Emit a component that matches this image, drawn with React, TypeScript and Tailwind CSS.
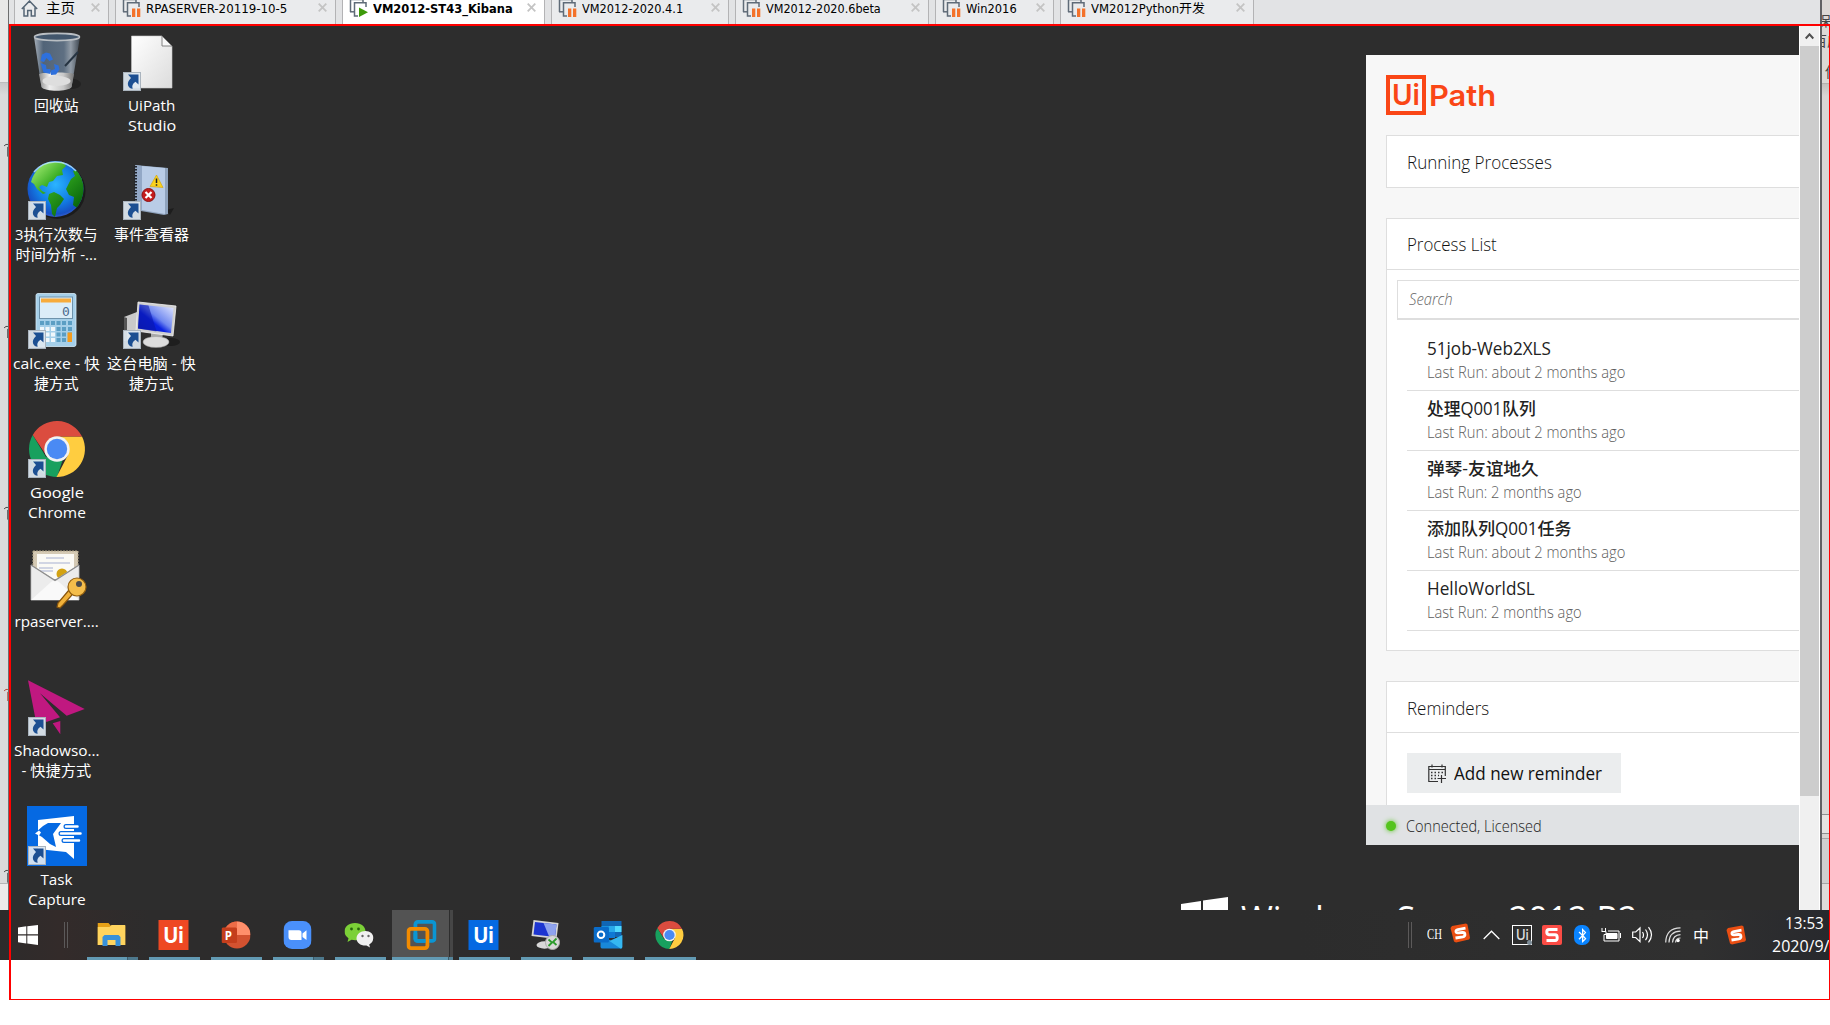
import { useLayoutEffect, useRef, useState } from "react";
import type { ReactNode } from "react";
import { FaBluetoothB } from "react-icons/fa";

/** Single line of text condensed or widened to an exact measure. */
function Fit({ w, className = "", children }: { w: number; className?: string; children: ReactNode }) {
  const ref = useRef<HTMLSpanElement>(null);
  const [scale, setScale] = useState(1);
  useLayoutEffect(() => {
    if (ref.current) setScale(w / ref.current.offsetWidth);
  }, [w]);
  return (
    <span className={`block shrink-0 whitespace-nowrap ${className}`} style={{ width: w }}>
      <span ref={ref} className="inline-block origin-left" style={{ transform: `scaleX(${scale})` }}>
        {children}
      </span>
    </span>
  );
}

const UI = "font-['Open_Sans','Noto_Sans_CJK_SC',sans-serif]";

/* ---------- tab strip ---------- */

function VmIcon({ running }: { running?: boolean }) {
  return (
    <svg width="19" height="20" viewBox="0 0 19 20" className="shrink-0" fill="none">
      <path d="M1.5 14V1.5H14V4" stroke="#5f6b78" strokeWidth="1.5" />
      <path d="M1 13.8h4" stroke="#5f6b78" strokeWidth="1.5" />
      <path d="M17 9V4.700H5.500V18H9" stroke="#5f6b78" strokeWidth="1.5" />
      {running ? (
        <path d="M10 9.500v9.500l9-4.700z" fill="#3d9a0a" />
      ) : (
        <path d="M10 10.500h3.300V19H10zM15 10.500h3.300V19H15z" fill="#f4722b" />
      )}
    </svg>
  );
}

function CloseX() {
  return (
    <svg width="9" height="9" viewBox="0 0 9 9" className="mt-[3px] shrink-0">
      <path d="M.7.700l7.600 7.600M8.300.700L.7 8.300" stroke="#c4c4c4" strokeWidth="1.800" />
    </svg>
  );
}

function Tab({ label, tw, width, active }: { label: string; tw: number; width: number; active?: boolean }) {
  return (
    <div
      className={`mr-[6px] flex h-full shrink-0 justify-between border-x border-[#b3b3b5] pl-[6px] pr-[8px] ${active ? "bg-white" : "bg-[#eaebed]"}`}
      style={{ width }}
    >
      <div className="flex gap-[5px]">
        <div className="-mt-[2px]">
          <VmIcon running={active} />
        </div>
        <Fit
          w={tw}
          className={`font-['DejaVu_Sans_Condensed','DejaVu_Sans','Noto_Sans_CJK_SC',sans-serif] text-[12.500px] leading-[17px] text-black ${active ? "font-bold" : ""}`}
        >
          {label}
        </Fit>
      </div>
      <CloseX />
    </div>
  );
}

function TabStrip() {
  return (
    <div className="flex h-[26px] w-full bg-[#e2e3e5] pl-[5px]">
      <div className="mr-[6px] flex h-full w-[95px] shrink-0 justify-between border-x border-[#b3b3b5] bg-[#eaebed] pl-[6px] pr-[8px]">
        <div className="flex gap-[8px]">
          <svg width="17" height="17" viewBox="0 0 17 17" className="shrink-0" fill="none">
            <path d="M.8 9L8.500 1l7.700 8M3 7.500V16h3.700v-5.500h3.600V16H14V7.500" stroke="#556575" strokeWidth="1.500" />
          </svg>
          <Fit w={29} className="font-['Noto_Sans_CJK_SC',sans-serif] text-[14px] leading-[15px] text-black">
            主页
          </Fit>
        </div>
        <CloseX />
      </div>
      <Tab label="RPASERVER-20119-10-5" tw={141} width={221} />
      <Tab label="VM2012-ST43_Kibana" tw={140} width={203} active />
      <Tab label="VM2012-2020.4.1" tw={101} width={178} />
      <Tab label="VM2012-2020.6beta" tw={115} width={194} />
      <Tab label="Win2016" tw={51} width={119} />
      <Tab label="VM2012Python开发" tw={114} width={194} />
    </div>
  );
}

/* ---------- desktop icons ---------- */

function ShortcutArrow() {
  return (
    <svg width="18" height="19" viewBox="0 0 18 19" className="absolute left-px top-[40px]">
      <rect x=".5" y=".5" width="17" height="18" fill="#dfe8f1" fillOpacity=".93" stroke="#aab4be" />
      <path d="M5 2.500h10.500v10l-3-2.700c-3 2-3.800 4-2.800 7C5 16.500 2.500 11 8 6z" fill="#1c4f92" />
    </svg>
  );
}

const ICON = "block h-[60px] w-[60px] overflow-visible";

function BinIcon() {
  return (
    <svg viewBox="0 0 60 60" className={ICON}>
      <defs>
        <linearGradient id="bin" x1="0" x2="1">
          <stop offset="0" stopColor="#a7b0ba" />
          <stop offset=".2" stopColor="#526478" />
          <stop offset=".65" stopColor="#5e6f82" />
          <stop offset=".8" stopColor="#929ca7" />
          <stop offset="1" stopColor="#3d4650" />
        </linearGradient>
        <linearGradient id="binBase" x1="0" x2="1">
          <stop offset="0" stopColor="#8f8f8f" />
          <stop offset=".3" stopColor="#eee" />
          <stop offset=".7" stopColor="#c8c8c8" />
          <stop offset="1" stopColor="#777" />
        </linearGradient>
      </defs>
      <ellipse cx="45" cy="52" rx="9" ry="5" fill="#222" />
      <path d="M7 5l7.500 50c3 4 27 4 30 0L53 5z" fill="url(#bin)" />
      <path d="M12 42l2.500 13c3 5 27 5 30 0L47 42c-5-2-30-2-35 0z" fill="url(#binBase)" />
      <ellipse cx="29.500" cy="49" rx="14" ry="5" fill="#dedede" />
      <ellipse cx="30" cy="5" rx="22.500" ry="3.600" fill="#42566c" stroke="#b9bec3" strokeWidth="1.600" />
      <path d="M15 22.500l4-2 4 1 3 6-3.500 1.500-3-3-2.500 4-3.500-1zM13.500 31l5.500 2 .5 4 4 0v5l-7-1.500zM27 32l4.500 1.500 1 4-3.500 5-5 .5v-4.500l4-1.500z" fill="#2e70dc" />
      <path d="M51 20L38 34" stroke="#263442" strokeWidth="2" />
    </svg>
  );
}

function DocIcon() {
  return (
    <svg viewBox="0 0 60 60" className={ICON}>
      <defs>
        <linearGradient id="doc" x1="0" y1="0" x2="1" y2="1">
          <stop offset="0" stopColor="#fff" />
          <stop offset="1" stopColor="#dcdcdc" />
        </linearGradient>
      </defs>
      <path d="M9.500 4h30.500L50 14v42H9.500z" fill="url(#doc)" stroke="#c6c6c6" strokeWidth=".6" />
      <path d="M40 4v10h10z" fill="#f8f8f8" stroke="#777" strokeWidth=".9" />
    </svg>
  );
}

function GlobeIcon() {
  return (
    <svg viewBox="0 1 60 60" className={ICON}>
      <defs>
        <radialGradient id="sea" cx=".5" cy=".42" r=".62">
          <stop offset="0" stopColor="#2bb4ff" />
          <stop offset=".55" stopColor="#127de4" />
          <stop offset=".85" stopColor="#1650c4" />
          <stop offset="1" stopColor="#4d6ad6" />
        </radialGradient>
        <linearGradient id="land" gradientUnits="userSpaceOnUse" x1="8" y1="6" x2="50" y2="50">
          <stop offset="0" stopColor="#9be86c" />
          <stop offset=".4" stopColor="#33a91f" />
          <stop offset="1" stopColor="#07630c" />
        </linearGradient>
        <clipPath id="globeClip">
          <circle cx="28.500" cy="29" r="28" />
        </clipPath>
      </defs>
      <circle cx="30.500" cy="31" r="28" fill="#1b1b1b" />
      <circle cx="28.500" cy="29" r="28" fill="url(#sea)" />
      <g clipPath="url(#globeClip)" fill="url(#land)">
        <path d="M4 22C7 11 15 4 22 2l14 0 3 4-4 4 1 5-6 1-4 5-4 1-2 5-5-2-3 2 3 4 4 2-3 1-6-5-3-5z" />
        <path d="M22 34l5-2 6 3 4 4-4 6-3 3-2 9-3-3-1-9-3-6z" />
        <path d="M44 19l4-3-2-5 4-1 8 12v16l-8 10-4-3 1-8-5-2-3-6z" />
      </g>
      <path d="M7 12A28 28 0 0 1 49 11" stroke="#bfeaff" strokeOpacity=".8" strokeWidth="1.500" fill="none" />
    </svg>
  );
}

function EventIcon() {
  return (
    <svg viewBox="0 1 60 60" className={ICON}>
      <path d="M44 50l8-2-4 7z" fill="#1d1d1d" />
      <path d="M13 5l33 3v46l-4 1-29-5z" fill="#8fa3bd" />
      <path d="M14 5.500l29 2.500v46L14 49z" fill="#b9cce6" />
      <path d="M14 5.500l6 .5v44L14 49z" fill="#93a8c6" />
      <path d="M13.500 6v43" stroke="#20242b" strokeWidth="3" strokeDasharray="1.500 1.500" />
      <path d="M34.500 15L41 27.500l-13-1z" fill="#fbd21c" stroke="#d0a000" strokeWidth=".6" />
      <path d="M34.500 18.500v4.500M34.500 24.200v1.500" stroke="#222" strokeWidth="1.500" />
      <circle cx="26.500" cy="35" r="6.500" fill="#c41c1c" stroke="#8c1010" />
      <path d="M23.500 32l6 6M29.500 32l-6 6" stroke="#fff" strokeWidth="2.200" />
    </svg>
  );
}

function CalcIcon() {
  const cols = [13, 18.5, 24, 29.5, 35, 41];
  const rows = [31, 37, 42.5, 48];
  return (
    <svg viewBox="0 0 60 60" className={ICON}>
      <rect x="9" y="3.500" width="40" height="53" rx="2" fill="#a5cfe9" stroke="#d5ebf7" strokeWidth=".8" />
      <rect x="12.500" y="7" width="33" height="21.500" fill="#dcedf8" stroke="#6e93ac" />
      <rect x="14" y="8.500" width="30" height="4" fill="#f7ab3b" />
      <text x="35" y="26" fontSize="13" fill="#4d6a8c" fontFamily="DejaVu Sans Mono, monospace">0</text>
      {rows.map((y, r) =>
        cols.map((x, c) => (
          <rect key={`${x}-${y}`} x={x} y={y} width="4" height="4" fill={r > 0 && c < 3 ? "#f1f7fb" : "#5b9ec4"} />
        )),
      )}
      <rect x="40.500" y="42.500" width="4.500" height="9.500" fill="#f39c1f" />
    </svg>
  );
}

function PcIcon() {
  return (
    <svg viewBox="0 0 60 60" className={ICON}>
      <defs>
        <linearGradient id="scr" x1="0" y1="1" x2="1" y2="0">
          <stop offset="0" stopColor="#0a1bb0" />
          <stop offset=".4" stopColor="#0a22e0" />
          <stop offset=".55" stopColor="#7088f0" />
          <stop offset="1" stopColor="#e8edff" />
        </linearGradient>
      </defs>
      <ellipse cx="49" cy="52" rx="9" ry="4" fill="#1e1e1e" />
      <path d="M2 27l13-5v26l-13 3z" fill="#c9c9c9" />
      <path d="M2 27l3 1v23l-3-1z" fill="#555" />
      <path d="M29 40l12 2-1 9-11-1z" fill="#a9a9a9" />
      <ellipse cx="34" cy="52" rx="13" ry="5.500" fill="#dcdcdc" stroke="#999" strokeWidth=".5" />
      <path d="M16 12l38 4-3 30-37-5z" fill="#d0d0d0" stroke="#f3f3f3" strokeWidth=".8" />
      <path d="M17.500 14.500l34 3.500-2.500 25L16 38.500z" fill="url(#scr)" />
      <path d="M17.500 14.500l9 1 8 26-18.500-3z" fill="#0a16a8" fillOpacity=".55" />
    </svg>
  );
}

function ChromeGlyph({ className }: { className: string }) {
  return (
    <svg viewBox="0 0 60 60" className={className}>
      <path d="M30 58A28 28 0 0 1 5.750 16L19 38L36 40Z" fill="#18a05e" />
      <path d="M30 17.500H55A28 28 0 0 1 29.500 58L41 36Z" fill="#ffcd40" />
      <path d="M5.750 16A28 28 0 0 1 55 17.500H30L19.200 36.300Z" fill="#db4c3f" />
      <circle cx="30" cy="30" r="12.700" fill="#f2f2f2" />
      <circle cx="30" cy="30" r="10.200" fill="#4a8af4" />
    </svg>
  );
}

function EnvelopeIcon() {
  return (
    <svg viewBox="0 0 60 60" className={ICON}>
      <path d="M6 3h45v25H6z" fill="#d5cab4" stroke="#b3a689" strokeDasharray="2 1" />
      <path d="M10 6h37v25H10z" fill="#fbfaf5" />
      <path d="M19 10h18M12 15h31M12 20h14M12 23h14" stroke="#c3c9dd" strokeWidth="1.500" />
      <circle cx="35" cy="26" r="5.500" fill="#d3a211" />
      <path d="M4 17l24 15 24-15v35H4z" fill="#ececec" stroke="#bdbdbd" strokeWidth=".8" />
      <path d="M4 52l20-18c3-2 5-2 8 0l20 18z" fill="#f9f9f9" />
      <path d="M4 17l24 15.500L52 17" fill="none" stroke="#8d8d8d" strokeWidth="1.200" />
      <path d="M42 42L31 55l-1 4 3 1 3-3 9-10z" fill="#f0b13a" stroke="#87540d" strokeWidth="1.200" />
      <circle cx="50" cy="39" r="9" fill="#f4bd4b" stroke="#95600f" strokeWidth="1.200" />
      <circle cx="52" cy="36" r="3" fill="#4b4b4b" />
    </svg>
  );
}

function PlaneIcon() {
  return (
    <svg viewBox="0 0 60 60" className={ICON}>
      <path d="M1 3.300L57.700 32 39.700 38.700 13 16.300 33 40.300 20 44.700H9zM25.700 46.300L33.300 44v13.300z" fill="#c01880" />
    </svg>
  );
}

function TaskIcon() {
  return (
    <svg viewBox="0 0 60 60" className={ICON}>
      <path d="M0 0h60v60H0z" fill="#0569e2" />
      <path d="M11 14l36-4v43l-8-7-28-3z" fill="#fff" />
      <path d="M8 27l8-7 5-3h13l-8 11 3 13-6-3-8-7z" fill="#0569e2" />
      <path d="M8 27.500l4-3 2 2-2 3z" fill="#fff" />
      <path d="M39 20.500h12M34 27.500h20M37 34.500h15" stroke="#0569e2" strokeWidth="5" strokeLinecap="round" />
      <path d="M39 20.500h11.500M34 27.500h19.500M37 34.500h15" stroke="#fff" strokeWidth="2.500" strokeLinecap="round" />
    </svg>
  );
}

type Item = { icon: ReactNode; lines: [string, number][]; shortcut?: boolean };

const columns: Item[][] = [
  [
    { icon: <BinIcon />, lines: [["回收站", 45]] },
    { icon: <GlobeIcon />, lines: [["3执行次数与", 83], ["时间分析 -...", 82]], shortcut: true },
    { icon: <CalcIcon />, lines: [["calc.exe - 快", 87], ["捷方式", 45]], shortcut: true },
    { icon: <ChromeGlyph className={ICON} />, lines: [["Google", 54], ["Chrome", 58]], shortcut: true },
    { icon: <EnvelopeIcon />, lines: [["rpaserver....", 84]] },
    { icon: <PlaneIcon />, lines: [["Shadowso...", 86], ["- 快捷方式", 70]], shortcut: true },
    { icon: <TaskIcon />, lines: [["Task", 32], ["Capture", 58]], shortcut: true },
  ],
  [
    { icon: <DocIcon />, lines: [["UiPath", 47], ["Studio", 48]], shortcut: true },
    { icon: <EventIcon />, lines: [["事件查看器", 75]], shortcut: true },
    { icon: <PcIcon />, lines: [["这台电脑 - 快", 89], ["捷方式", 45]], shortcut: true },
  ],
];

function DesktopIcon({ icon, lines, shortcut }: Item) {
  return (
    <div className="flex h-[129px] w-[95px] flex-col items-center">
      <div className="relative h-[60px] w-[60px] shrink-0">
        {icon}
        {shortcut && <ShortcutArrow />}
      </div>
      <div className={`mt-[3px] flex flex-col items-center text-[15.200px] leading-[20px] text-white ${UI}`}>
        {lines.map(([t, w]) => (
          <Fit key={t} w={w} className="h-[20px]">
            {t}
          </Fit>
        ))}
      </div>
    </div>
  );
}

/* ---------- assistant panel ---------- */

const processes: [string, number, string, number][] = [
  ["51job-Web2XLS", 124, "Last Run: about 2 months ago", 198],
  ["处理Q001队列", 109, "Last Run: about 2 months ago", 198],
  ["弹琴-友谊地久", 112, "Last Run: 2 months ago", 155],
  ["添加队列Q001任务", 145, "Last Run: about 2 months ago", 198],
  ["HelloWorldSL", 108, "Last Run: 2 months ago", 155],
];

function CardTitle({ children, w }: { children: string; w: number }) {
  return (
    <Fit w={w} className="text-[18px] font-light leading-[24px] text-[#111]">
      {children}
    </Fit>
  );
}

function Panel() {
  return (
    <div className={`absolute right-0 top-[29px] flex h-[790px] w-[433px] flex-col overflow-hidden bg-[#f7f7f7] ${UI}`}>
      <div className="flex h-[750px] flex-col overflow-hidden pl-[20px] pt-[20px]">
        <div className="flex h-[40px] shrink-0 items-center gap-[3px] font-['Inter',sans-serif] text-[29px] font-semibold leading-[40px] text-[#fa4616]">
          <div className="flex h-[40px] w-[40px] items-center justify-center border-4 border-[#fa4616]">
            <Fit w={28}>Ui</Fit>
          </div>
          <Fit w={67} className="pt-px">Path</Fit>
        </div>
        <div className="mt-[20px] flex h-[53px] shrink-0 items-center border-y border-l border-[#dedede] bg-white pl-[20px]">
          <CardTitle w={145}>Running Processes</CardTitle>
        </div>
        <div className="mt-[30px] flex h-[433px] shrink-0 flex-col border-y border-l border-[#dedede] bg-white">
          <div className="flex h-[51px] shrink-0 items-center border-b border-[#dedede] pl-[20px]">
            <CardTitle w={90}>Process List</CardTitle>
          </div>
          <div className="ml-[10px] mt-[10px] flex h-[40px] shrink-0 items-center border border-r-0 border-b-2 border-[#dedede] pb-px pl-[11px]">
            <Fit w={44} className="text-[15.500px] font-light italic leading-[20px] text-[#666]">
              Search
            </Fit>
          </div>
          <div className="ml-[20px] mt-[11px] flex flex-col">
            {processes.map(([name, nw, run, rw]) => (
              <div key={name} className="flex h-[60px] flex-col border-b border-[#dedede] pl-[20px] pt-[5px]">
                <Fit w={nw} className="h-[25px] text-[17.500px] font-medium leading-[25px] text-[#222]">
                  {name}
                </Fit>
                <Fit w={rw} className="h-[22px] text-[15.500px] font-light leading-[23px] text-[#5c5c5c]">
                  {run}
                </Fit>
              </div>
            ))}
          </div>
        </div>
        <div className="mt-[30px] flex h-[140px] shrink-0 flex-col border-l border-t border-[#dedede] bg-white">
          <div className="flex h-[51px] shrink-0 items-center border-b border-[#dedede] pl-[20px] pt-px">
            <CardTitle w={82}>Reminders</CardTitle>
          </div>
          <div className="ml-[20px] mt-[20px] flex h-[40px] w-[214px] items-center gap-[8px] bg-[#ebedee] pl-[21px]">
            <svg width="18" height="19" viewBox="0 0 18 19" fill="none" stroke="#333" className="shrink-0">
              <path d="M10 17.500H.8V2.500h16.500V12M.8 5.500h16.500M4 .5v3M14 .5v3M13.500 11v8M9.500 14.500H18" strokeWidth="1.200" />
              <path d="M3 8.500h12.500M3 11.500h8M3 14.500h5" strokeDasharray="1.500 2" strokeWidth="1.500" />
            </svg>
            <Fit w={148} className="text-[18px] font-medium leading-[24px] text-[#111]">
              Add new reminder
            </Fit>
          </div>
        </div>
      </div>
      <div className="flex h-[40px] shrink-0 items-center gap-[10px] bg-[#e0e2e4] pl-[20px]">
        <span className="mt-[2px] h-[10px] w-[10px] rounded-full bg-[#54c41d] shadow-[0_0_5px_#54c41d]" />
        <Fit w={136} className="pt-px text-[15.500px] font-[350] leading-[22px] text-[#222]">
          Connected, Licensed
        </Fit>
      </div>
    </div>
  );
}

function Desktop() {
  return (
    <div className="relative h-full w-[1790px] shrink-0 overflow-hidden bg-[#2d2d2d]">
      <div className="flex pt-[6px]">
        {columns.map((items, i) => (
          <div key={i} className="flex flex-col">
            {items.map((item, j) => (
              <DesktopIcon key={j} {...item} />
            ))}
          </div>
        ))}
      </div>
      <Panel />
      <div className="absolute left-[1172px] top-[871px] flex h-[50px] w-[470px] gap-[13px]">
        <svg width="47" height="46" viewBox="0 0 47 46" className="shrink-0" fill="#fff">
          <path d="M0 7l20-3v18H0zM22 3.500L47 0v22H22zM0 24h20v18L0 39zM22 24h25v22l-25-3.500z" />
        </svg>
        <Fit w={396} className={`-mt-[2px] text-[37px] leading-[46px] text-white ${UI}`}>
          Windows Server 2012 R2
        </Fit>
      </div>
    </div>
  );
}

/* ---------- taskbar ---------- */

function UiTile({ className }: { className: string }) {
  return (
    <div className={`flex h-[30px] w-[30px] items-center justify-center font-['Inter',sans-serif] text-[22px] font-bold leading-[30px] text-white ${className}`}>
      <Fit w={20}>Ui</Fit>
    </div>
  );
}

function Sogou({ className = "" }: { className?: string }) {
  return (
    <svg width="20" height="20" viewBox="0 0 20 20" className={className}>
      <path d="M2 3L16 .5l1.500 1L20 15l-1 1.500L6 19.500 4 18.500.5 5z" fill="#ea4e12" />
      <path d="M15.500 5.200L8 6.500c-3 .7-2.500 3.500 0 3.400l4.500-.4c3-.2 3.400 3.600.3 4.400L5.500 15" stroke="#fff" strokeWidth="2.800" fill="none" />
    </svg>
  );
}

const taskIcons: ReactNode[] = [
  <svg width="28" height="24" viewBox="0 0 28 24">
    <path d="M0 0h11l2.500 3H28v19H0z" fill="#e6a117" />
    <path d="M0 4h12l2-2h14v20H0z" fill="#ffd45e" />
    <path d="M5 23V14l2-2h14l2 2v9h-5v-6H10v6z" fill="#3791da" />
  </svg>,
  <UiTile className="bg-[#ee4823]" />,
  <svg width="29" height="28" viewBox="0 0 29 28">
    <circle cx="15.500" cy="14" r="13.500" fill="#d35230" />
    <path d="M15.500.5A13.500 13.500 0 0 0 2 14h13.500z" fill="#ed6c47" />
    <path d="M15.500.5A13.500 13.500 0 0 1 29 14H15.500z" fill="#ff8f6b" />
    <rect y="6.500" width="15.500" height="15.500" rx="1.500" fill="#c43e1c" />
    <text x="3.300" y="18.500" fontSize="11.500" fontWeight="700" fill="#fff" fontFamily="Open Sans, sans-serif">P</text>
  </svg>,
  <svg width="28" height="28" viewBox="0 0 28 28">
    <rect width="28" height="28" rx="8.500" fill="#4a90fb" />
    <path d="M5 9.300h10.500a2.500 2.500 0 0 1 2.500 2.500V19H8a3 3 0 0 1-3-3zM19 12.500L23 9.300v9.700L19 16z" fill="#fff" />
  </svg>,
  <svg width="30" height="26" viewBox="0 0 30 26">
    <path d="M10.500 1C4 1 0 5 0 9.500c0 3 1.500 5 4 6.700L3 20l4-2.200c9 2 14.500-3 14-8.300C21 5 17 1 10.500 1z" fill="#7bd037" />
    <path d="M21 9c-5 0-9 3-9 7.500s4.500 7.500 10 7l3.500 2-.8-3c2.500-1.500 4-3.500 4-6C29.500 12 25.500 9 21 9z" fill="#f0f0f0" />
    <circle cx="7" cy="7" r="1.400" fill="#28660c" />
    <circle cx="14" cy="7" r="1.400" fill="#28660c" />
    <circle cx="18" cy="14" r="1.200" fill="#666" />
    <circle cx="24" cy="14" r="1.200" fill="#666" />
  </svg>,
  <svg width="30" height="30" viewBox="0 0 30 30" fill="none" strokeWidth="3.800">
    <rect x="8.900" y="1.900" width="19.200" height="19" rx="2.500" stroke="#0b95d3" />
    <rect x="1.900" y="8.900" width="19" height="19.200" rx="2.500" stroke="#f38b00" />
    <path d="M8.900 13V19a2 2 0 0 0 2 1.900H19" stroke="#0b95d3" />
  </svg>,
  <UiTile className="bg-[#0569e2]" />,
  <svg width="30" height="30" viewBox="0 0 30 30">
    <path d="M3 0l25 3-2 16L1 16z" fill="#d5d5d5" />
    <path d="M4.500 2L26 4.500 24.500 17 3 14.500z" fill="#1d35d0" />
    <path d="M13 3l13 1.500L24.500 17l-6-.7z" fill="#8fa3ee" />
    <ellipse cx="14" cy="25" rx="8" ry="3.700" fill="#d8d8d8" />
    <circle cx="22" cy="22.500" r="7" fill="#d8d8d8" stroke="#aaa" />
    <path d="M18 19.500l3.500 3-3.500 3.500M26 18.500L22.500 22l3.500 3" stroke="#2b9b2b" strokeWidth="1.800" fill="none" />
  </svg>,
  <svg width="29" height="28" viewBox="0 0 29 28">
    <path d="M8 0h20v16H8z" fill="#1066b5" />
    <path d="M8 5h7v6H8z" fill="#1490df" />
    <path d="M15 5h6.500v6H15z" fill="#28a8ea" />
    <path d="M21.500 5H28v6h-6.500z" fill="#50d9ff" />
    <path d="M15 11h6.500v6H15z" fill="#0f78d4" />
    <path d="M7 14l11 6 11-6v12a2 2 0 0 1-2 1.500H9A2 2 0 0 1 7 26z" fill="#1888d8" />
    <path d="M29 14v12a2 2 0 0 1-2 1.500L16 20z" fill="#35b8f1" />
    <rect y="6" width="15.500" height="15.500" rx="1.500" fill="#0a6cc9" />
    <circle cx="7.500" cy="13.700" r="3.300" fill="none" stroke="#fff" strokeWidth="2" />
  </svg>,
  <ChromeGlyph className="h-[30px] w-[30px]" />,
];

function Grip() {
  return <div className="h-[26px] w-[4px] border-x border-[#5c5a5a]" />;
}

function Taskbar() {
  return (
    <div className="flex h-[50px] w-full shrink-0 overflow-hidden bg-[linear-gradient(90deg,#2d2b2b_0,#332b2a_60px,#2d2c2c_150px,#2c2c2c_1300px,#303030_1700px,#28292d_1830px)]">
      <div className="flex h-full w-[81px] shrink-0 items-center pl-[18px]">
        <svg width="20" height="20" viewBox="0 0 20 20" fill="#fff">
          <path d="M0 2.500l8.300-1.200v8H0zM9.300 1.200L20 0v9.300H9.300zM0 10.400h8.300v8L0 17.300zM9.300 10.400H20V20l-10.700-1.400z" />
        </svg>
        <div className="ml-[26px]">
          <Grip />
        </div>
      </div>
      {taskIcons.map((icon, i) => (
        <div key={i} className={`relative flex h-full w-[62px] shrink-0 items-center justify-center ${i === 5 ? "bg-clip-content px-px bg-[#535353]" : ""}`}>
          {i === 5 && <div className="absolute bottom-0 right-0 h-full w-[4px] border-l border-[#2e2e2e] bg-[#464646]" />}
          <div className="-translate-x-[0.5px]">{icon}</div>
          <div className={`absolute bottom-0 flex h-[3px] bg-[#629ab3] ${i === 5 ? "left-px w-[61px]" : "left-[6px] w-[51px]"}`}>
            {(i === 0 || i === 3) && <div className="ml-auto h-full w-[11px] border-l border-[#3d5b69] bg-[#4d788c]" />}
            {i === 5 && <div className="ml-auto h-full w-[5px] border-l border-[#3d5b69] bg-[#55859a]" />}
          </div>
        </div>
      ))}
      <div className="ml-auto flex h-full shrink-0 items-center">
        <Grip />
        <Fit w={15} className="-mt-[3px] ml-[15px] font-['Liberation_Serif',serif] text-[15px] leading-[18px] text-white">
          CH
        </Fit>
        <Sogou className="-mt-[4px] ml-[8px]" />
        <svg width="17" height="10" viewBox="0 0 17 10" className="ml-[13px]" fill="none">
          <path d="M.7 9L8.500 1.200 16.300 9" stroke="#fff" strokeWidth="1.300" />
        </svg>
        <div className="relative ml-[12px] flex h-[20px] w-[20px] items-center justify-center border border-white font-['Inter',sans-serif] text-[14px] font-medium leading-[18px] text-[#ddd]">
          <Fit w={13}>Ui</Fit>
          <span className="absolute -bottom-px -right-px h-[5px] w-[5px] rounded-full bg-[#7c8b96]" />
        </div>
        <svg width="20" height="20" viewBox="0 0 20 20" className="ml-[10px]">
          <rect width="20" height="20" rx="2" fill="#fb4c45" />
          <path d="M15.500 4.500H7Q4.800 4.500 4.800 7T7 9.800h6q2.200 0 2.200 2.900T13 15.500H4.500" fill="none" stroke="#fff" strokeWidth="3" />
        </svg>
        <div className="ml-[12px] flex h-[20px] w-[16px] items-center justify-center rounded-[7px] bg-[#0a84ff]">
          <FaBluetoothB className="h-[15px] w-[13px] text-white" />
        </div>
        <svg width="20" height="14" viewBox="0 0 20 14" className="ml-[11px]" fill="none" stroke="#fff">
          <path d="M1 0v3M4.500 0v3M.5 3.500H5v3H3v6.500h15V3H7M19.500 5v5" />
          <path d="M5.500 5.500H16v5H5.500z" fill="#fff" />
        </svg>
        <svg width="21" height="18" viewBox="0 0 21 18" className="ml-[11px]" fill="none" stroke="#fff" strokeWidth="1.200">
          <path d="M.7 6v5.500h3L8 15.700V2L3.700 6zM10.500 6q2 3 0 6M13.500 3.500q4 5.300 0 10.700M16.500 1.200q6 7.600 0 15.200" />
        </svg>
        <svg width="16" height="16" viewBox="0 0 16 16" className="ml-[12px]" fill="none" stroke="#ddd" strokeWidth="1.200">
          <path d="M.7 15.500Q1 1 15.500.8M4 15.500Q4.300 4.500 15.500 4.200M7.500 15.500Q8 8 15.500 7.700" />
          <circle cx="13" cy="13.500" r="1.800" fill="#fff" stroke="none" />
          <path d="M10.500 15.500Q11 11 15.500 11" />
        </svg>
        <Fit w={16} className="ml-[12px] font-['Noto_Sans_CJK_SC',sans-serif] text-[16px] leading-[24px] text-white">
          中
        </Fit>
        <Sogou className="ml-[17px]" />
        <div className={`ml-[26px] flex w-[58px] flex-col items-start text-[16px] leading-[23px] text-white ${UI}`}>
          <Fit w={39} className="ml-[13px]">
            13:53
          </Fit>
          <Fit w={57}>2020/9/</Fit>
        </div>
      </div>
    </div>
  );
}

/* ---------- page ---------- */

function LeftSliver() {
  return (
    <div className="flex h-full w-[9px] shrink-0 flex-col border-r border-[#6e6e6e] bg-[#d6d6d6]">
      <div className="h-[83px] border-b border-[#bdbdbd] bg-[#e9e8e7]" />
      <div className="flex h-[800px] flex-col items-end gap-[168px] bg-[linear-gradient(#c9c9c9,#dadada_12px)] pt-[60px]">
        {["#333", "#333", "#333", "#b03a2a", "#333"].map((c, i) => (
          <svg key={i} width="4" height="14" viewBox="0 0 4 14" fill="none" stroke={c}>
            <path d="M0 3L2 1.500h2M3.800 4v10" strokeWidth=".9" />
          </svg>
        ))}
      </div>
      <div className="flex-1 border-t border-[#b5b5b5] bg-[#ecebea]" />
    </div>
  );
}

function RightSliver() {
  return (
    <div className="flex h-full w-[10px] shrink-0 flex-col overflow-hidden border-l-2 border-[#616163] bg-[#d8d5d2]">
      <div className="flex h-[84px] flex-col border-b border-[#b5b0ad] bg-[#dcd8d5] pt-[10px] font-['Noto_Sans_CJK_SC',sans-serif] text-[14px] leading-[20px] text-[#444]">
        <span className="-ml-[5px] w-[14px]">保</span>
        <span className="-ml-[9px] w-[28px] whitespace-nowrap">百度</span>
        <span className="ml-[3px] mt-[11px] w-[14px] whitespace-nowrap">使</span>
      </div>
      <div className="h-[730px] bg-[linear-gradient(#c4c0bd,#d9d6d4_12px)]" />
      <div className="h-[20px] border-y border-r border-[#8e8e8e] bg-[#e5e3e1]" />
      <div className="mt-[4px] h-[46px] border-y border-[#a5a5a5] bg-[#cfcfcf]" />
      <div className="flex-1 bg-[#dedcda]" />
    </div>
  );
}

function ScrollBar() {
  return (
    <div className="ml-px flex h-full w-[19px] shrink-0 flex-col bg-[#f0f0f0]">
      <div className="flex h-[20px] items-center justify-center">
        <svg width="9" height="7" viewBox="0 0 9 7" fill="none">
          <path d="M.7 5.500L4.500 1.300 8.300 5.500" stroke="#505050" strokeWidth="2" />
        </svg>
      </div>
      <div className="h-[750px] bg-[#cdcdcd]" />
    </div>
  );
}

export default function App() {
  return (
    <div className="relative flex h-[1025px] w-[1830px] flex-col overflow-hidden bg-white">
      <div className="flex h-[910px] shrink-0">
        <LeftSliver />
        <div className="flex w-[1811px] shrink-0 flex-col bg-white">
          <TabStrip />
          <div className="flex h-[884px]">
            <Desktop />
            <ScrollBar />
          </div>
        </div>
        <RightSliver />
      </div>
      <Taskbar />
      <div className="pointer-events-none absolute left-[9px] top-[24px] h-[976px] w-[1821px] border-b border-l-2 border-r border-t-2 border-[#ff0000]" />
    </div>
  );
}
